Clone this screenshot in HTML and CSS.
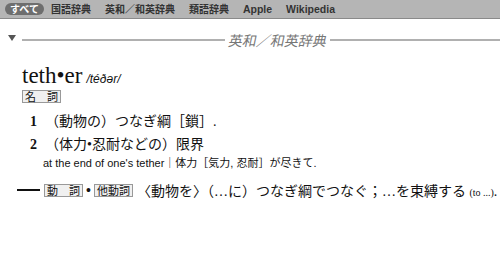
FILE: index.html
```html
<!DOCTYPE html>
<html lang="ja">
<head>
<meta charset="utf-8">
<link rel="stylesheet" href="styles.css">
</head>
<body>
<nav class="tabs">
  <span class="tab active">すべて</span>
  <span class="tab">国語辞典</span>
  <span class="tab">英和／和英辞典</span>
  <span class="tab">類語辞典</span>
  <span class="tab latin">Apple</span>
  <span class="tab latin">Wikipedia</span>
</nav>
<main class="content">
  <div class="section-head">
    <span class="tri"></span>
    <span class="rule short"></span>
    <span class="section-title">英和／和英辞典</span>
    <span class="rule"></span>
  </div>
  <div class="entry">
    <div class="headword"><span class="hw">teth•er</span> <span class="pron">/téðə<i>r</i>/</span></div>
    <div class="pos-row"><span class="pos">名　詞</span></div>
    <div class="sense first"><span class="num">1</span><span>（動物の）つなぎ綱［鎖］.</span></div>
    <div class="sense second"><span class="num">2</span><span>（体力•忍耐などの）限界</span></div>
    <div class="example">at the end of one's tether｜体力［気力, 忍耐］が尽きて.</div>
    <div class="verb-row"><span class="dash"></span><span class="pos">動　詞</span><span class="dot">•</span><span class="pos">他動詞</span><span class="vdef">〈動物を〉（…に）つなぎ綱でつなぐ；…を束縛する <span class="small">(to ...)</span>.</span></div>
  </div>
</main>
</body>
</html>
```
FILE: styles.css
```css
html, body {
  margin: 0;
  padding: 0;
  background: #fff;
}
body {
  width: 500px;
  height: 273px;
  overflow: hidden;
  font-family: "Liberation Serif", "Noto Sans CJK JP", serif;
  color: #111;
}
.tabs {
  height: 18px;
  background: #b5b5b5;
  border-bottom: 1px solid #8a8a8a;
  display: flex;
  align-items: center;
  padding-left: 5px;
  font-family: "Noto Sans CJK JP", "Liberation Sans", sans-serif;
  font-size: 10px;
  font-weight: bold;
  color: #333;
}
.tab {
  padding: 0 7px;
  line-height: 12px;
}
.tab.latin {
  font-family: "Liberation Sans", sans-serif;
  font-size: 10.5px;
}
.tab.active {
  background: #6e6e6e;
  color: #fff;
  border-radius: 7px;
  padding: 0 5px;
}
.section-head {
  display: flex;
  align-items: center;
  margin-top: 13px;
  height: 16px;
}
.tri {
  width: 0;
  height: 0;
  border-left: 4px solid transparent;
  border-right: 4px solid transparent;
  border-top: 6px solid #555;
  margin-left: 8px;
  margin-right: 6px;
  margin-top: -4px;
}
.rule {
  flex: 1;
  height: 2px;
  background: #b0b0b0;
}
.rule.short {
  flex: 0 0 203px;
}
.section-title {
  font-family: "Noto Sans CJK JP", sans-serif;
  transform: skewX(-12deg);
  color: #777;
  font-size: 14px;
  padding: 0 3px 0 4px;
}
.entry {
  padding-left: 22px;
}
.headword {
  margin-top: 16px;
  line-height: 24px;
}
.hw {
  font-size: 23px;
}
.pron {
  font-family: "Liberation Sans", sans-serif;
  font-style: italic;
  font-size: 12px;
}
.pos-row {
  margin-top: -1px;
  display: flex;
}
.pos {
  display: inline-block;
  font-family: "Noto Sans CJK JP", sans-serif;
  font-size: 11px;
  line-height: 11px;
  padding: 0 2px;
  background: #f0f0f0;
  border: 1px solid #999;
}
.sense {
  font-size: 14px;
  line-height: 22px;
  margin-left: 8px;
  display: flex;
}
.sense.first { margin-top: 8px; }
.sense.second { margin-top: 1px; }
.num {
  font-weight: bold;
  width: 15px;
}
.example {
  font-family: "Liberation Sans", "Noto Sans CJK JP", sans-serif;
  font-size: 11px;
  margin-left: 21px;
  line-height: 12px;
  margin-top: 1px;
}
.verb-row {
  display: flex;
  align-items: center;
  margin-left: -5px;
  margin-top: 11px;
  font-size: 14px;
}
.dash {
  width: 23px;
  height: 2px;
  background: #111;
  margin-right: 4px;
}
.dot { margin: 0 3px; font-family: "Liberation Sans", sans-serif; }
.vdef {
  margin-left: 4px;
}
.small { font-size: 10px; }
```
